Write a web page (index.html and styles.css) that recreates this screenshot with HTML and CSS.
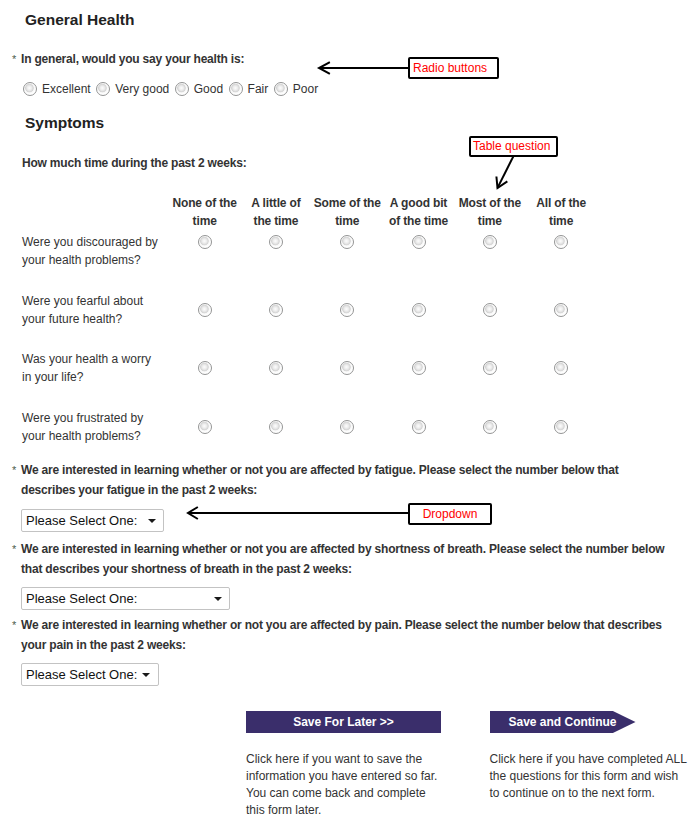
FILE: index.html
```html
<!DOCTYPE html>
<html>
<head>
<meta charset="utf-8">
<title>Health Form</title>
<link rel="stylesheet" href="styles.css">
</head>
<body>
<div class="page">
  <h2 class="sec-title">General Health</h2>
  <div class="q q-first"><span class="req">*</span>In general, would you say your health is:</div>
  <div class="radio-row">
    <label class="opt"><span class="radio"></span>Excellent</label>
    <label class="opt"><span class="radio"></span>Very good</label>
    <label class="opt"><span class="radio"></span>Good</label>
    <label class="opt"><span class="radio"></span>Fair</label>
    <label class="opt"><span class="radio"></span>Poor</label>
  </div>

  <h2 class="sec-title sec-symptoms">Symptoms</h2>
  <div class="q-plain">How much time during the past 2 weeks:</div>

  <div class="matrix">
    <div class="mrow mhead">
      <div></div>
      <div class="mh">None of the<br>time</div>
      <div class="mh">A little of<br>the time</div>
      <div class="mh">Some of the<br>time</div>
      <div class="mh">A good bit<br>of the time</div>
      <div class="mh">Most of the<br>time</div>
      <div class="mh">All of the<br>time</div>
    </div>
    <div class="mrow mfirst">
      <div class="ml">Were you discouraged by<br>your health problems?</div>
      <div class="mc"><span class="radio"></span></div>
      <div class="mc"><span class="radio"></span></div>
      <div class="mc"><span class="radio"></span></div>
      <div class="mc"><span class="radio"></span></div>
      <div class="mc"><span class="radio"></span></div>
      <div class="mc"><span class="radio"></span></div>
    </div>
    <div class="mrow">
      <div class="ml">Were you fearful about<br>your future health?</div>
      <div class="mc"><span class="radio"></span></div>
      <div class="mc"><span class="radio"></span></div>
      <div class="mc"><span class="radio"></span></div>
      <div class="mc"><span class="radio"></span></div>
      <div class="mc"><span class="radio"></span></div>
      <div class="mc"><span class="radio"></span></div>
    </div>
    <div class="mrow">
      <div class="ml">Was your health a worry<br>in your life?</div>
      <div class="mc"><span class="radio"></span></div>
      <div class="mc"><span class="radio"></span></div>
      <div class="mc"><span class="radio"></span></div>
      <div class="mc"><span class="radio"></span></div>
      <div class="mc"><span class="radio"></span></div>
      <div class="mc"><span class="radio"></span></div>
    </div>
    <div class="mrow">
      <div class="ml">Were you frustrated by<br>your health problems?</div>
      <div class="mc"><span class="radio"></span></div>
      <div class="mc"><span class="radio"></span></div>
      <div class="mc"><span class="radio"></span></div>
      <div class="mc"><span class="radio"></span></div>
      <div class="mc"><span class="radio"></span></div>
      <div class="mc"><span class="radio"></span></div>
    </div>
  </div>

  <div class="dq dq-1">
    <div class="q q-long"><span class="req">*</span>We are interested in learning whether or not you are affected by fatigue. Please select the number below that<br>describes your fatigue in the past 2 weeks:</div>
    <div class="select sel-1"><span class="sel-text">Please Select One:</span><span class="caret"></span></div>
  </div>
  <div class="dq dq-2">
    <div class="q q-long"><span class="req">*</span>We are interested in learning whether or not you are affected by shortness of breath. Please select the number below<br>that describes your shortness of breath in the past 2 weeks:</div>
    <div class="select sel-2"><span class="sel-text">Please Select One:</span><span class="caret"></span></div>
  </div>
  <div class="dq dq-3">
    <div class="q q-long"><span class="req">*</span>We are interested in learning whether or not you are affected by pain. Please select the number below that describes<br>your pain in the past 2 weeks:</div>
    <div class="select sel-3"><span class="sel-text">Please Select One:</span><span class="caret"></span></div>
  </div>

  <div class="actions">
    <div class="action action-save">
      <div class="btn btn-save">Save For Later &gt;&gt;</div>
      <p class="action-desc">Click here if you want to save the<br>information you have entered so far.<br>You can come back and complete<br>this form later.</p>
    </div>
    <div class="action action-continue">
      <div class="btn btn-continue">Save and Continue</div>
      <p class="action-desc">Click here if you have completed ALL<br>the questions for this form and wish<br>to continue on to the next form.</p>
    </div>
  </div>

  <svg class="arrows" width="700" height="836" viewBox="0 0 700 836" aria-hidden="true">
    <g fill="none" stroke="#000" stroke-width="2" stroke-linecap="square">
      <line x1="320" y1="68" x2="408" y2="68"/>
      <polyline points="329,62.5 319,68 329,73.5"/>
      <line x1="513" y1="157" x2="498" y2="187"/>
      <polyline points="496.5,177.5 497.5,188 506.5,182"/>
      <line x1="189" y1="513" x2="408" y2="513"/>
      <polyline points="197,507.5 188,513 197,518.5"/>
    </g>
  </svg>
  <div class="callout callout-radio">Radio buttons</div>
  <div class="callout callout-table">Table question</div>
  <div class="callout callout-dropdown">Dropdown</div>
</div>
</body>
</html>
```

FILE: styles.css
```css
html, body {
  margin: 0;
  padding: 0;
  background: #ffffff;
}

body {
  font-family: "Liberation Sans", Arial, sans-serif;
  font-size: 12px;
  color: #333333;
}

.page {
  position: relative;
  width: 700px;
  height: 836px;
  box-sizing: border-box;
  padding-top: 10px;
  overflow: hidden;
}

.sec-title {
  margin: 0 0 0 25px;
  font-size: 15.5px;
  line-height: 20px;
  font-weight: bold;
  color: #222222;
}

.sec-symptoms {
  margin-top: 15px;
}

.q {
  margin-left: 21px;
  font-weight: bold;
  line-height: 18px;
  letter-spacing: -0.2px;
  color: #333333;
}

.q-first {
  margin-top: 20px;
}

.req {
  display: inline-block;
  width: 9px;
  margin-left: -9px;
  font-size: 11px;
  font-weight: normal;
  letter-spacing: 0;
  color: #4d5c4d;
}

.radio-row {
  display: flex;
  align-items: center;
  height: 18px;
  margin: 12px 0 0 23px;
}

.opt {
  display: flex;
  align-items: center;
  margin-right: 5.5px;
  line-height: 18px;
}

.radio {
  display: inline-block;
  width: 14px;
  height: 14px;
  box-sizing: border-box;
  border-radius: 50%;
  border: 1px solid #939494;
  background: radial-gradient(circle at 45% 42%, #fdfdfd 0, #ececec 2.2px, #d4d4d4 3.9px, #f6f6f6 4.6px, #ffffff 6px);
  flex: none;
}

.opt .radio {
  margin-right: 5px;
}

.q-plain {
  margin: 21px 0 0 22px;
  font-weight: bold;
  line-height: 18px;
  letter-spacing: -0.2px;
}

.matrix {
  margin: 22px 0 0 22px;
}

.mrow {
  display: grid;
  grid-template-columns: 147px repeat(6, 71.3px);
  margin-bottom: 22.5px;
}

.mhead {
  margin-bottom: 3px;
}

.mh {
  text-align: center;
  font-weight: bold;
  line-height: 18px;
  letter-spacing: -0.15px;
}

.ml {
  line-height: 18px;
  height: 36px;
}

.mc {
  display: flex;
  justify-content: center;
  align-items: center;
}

.mfirst .mc {
  align-items: flex-start;
}

.mfirst .mc .radio {
  margin-top: 2px;
}

.dq-1 {
  margin-top: -7.5px;
}

.dq-2 {
  margin-top: 6.5px;
}

.dq-3 {
  margin-top: 5px;
}

.q-long {
  white-space: nowrap;
  line-height: 20.5px;
}

.select {
  display: flex;
  align-items: center;
  justify-content: space-between;
  box-sizing: border-box;
  height: 23px;
  margin: 7px 0 0 21px;
  padding: 0 7px 0 4px;
  border: 1px solid #c3c3c3;
  border-radius: 2px;
  background: #ffffff;
  font-size: 13px;
  color: #111111;
}

.sel-1 {
  width: 143px;
  margin-top: 8.5px;
}

.sel-2 {
  width: 209px;
}

.sel-3 {
  width: 138px;
  margin-top: 7.5px;
  padding-right: 8px;
}

.caret {
  width: 0;
  height: 0;
  border-left: 4px solid transparent;
  border-right: 4px solid transparent;
  border-top: 4px solid #1a1a1a;
  margin-top: 1px;
}

.actions {
  display: flex;
  gap: 48.5px;
  margin: 25px 0 0 246px;
}

.action {
  display: flex;
  flex-direction: column;
}

.btn {
  height: 22px;
  line-height: 22px;
  text-align: center;
  font-weight: bold;
  color: #ffffff;
  background: #3a2e6b;
}

.btn-save {
  width: 195px;
}

.btn-continue {
  width: 146px;
  clip-path: polygon(0 0, 84.5% 0, 100% 50%, 84.5% 100%, 0 100%);
}

.action-desc {
  margin: 17.5px 0 0 0;
  line-height: 17.3px;
  color: #333333;
  white-space: nowrap;
}

.arrows {
  position: absolute;
  left: 0;
  top: 0;
  pointer-events: none;
}

.callout {
  position: absolute;
  box-sizing: border-box;
  height: 22px;
  border: 2px solid #000000;
  border-radius: 2px;
  background: #ffffff;
  color: #ff0000;
  line-height: 18px;
  font-size: 12px;
  white-space: nowrap;
}

.callout-radio {
  left: 408px;
  top: 57px;
  width: 91px;
  padding-left: 3px;
}

.callout-table {
  left: 469px;
  top: 136px;
  width: 89px;
  height: 21px;
  line-height: 17px;
  padding-left: 2px;
}

.callout-dropdown {
  left: 408px;
  top: 503px;
  width: 84px;
  text-align: center;
}
```
